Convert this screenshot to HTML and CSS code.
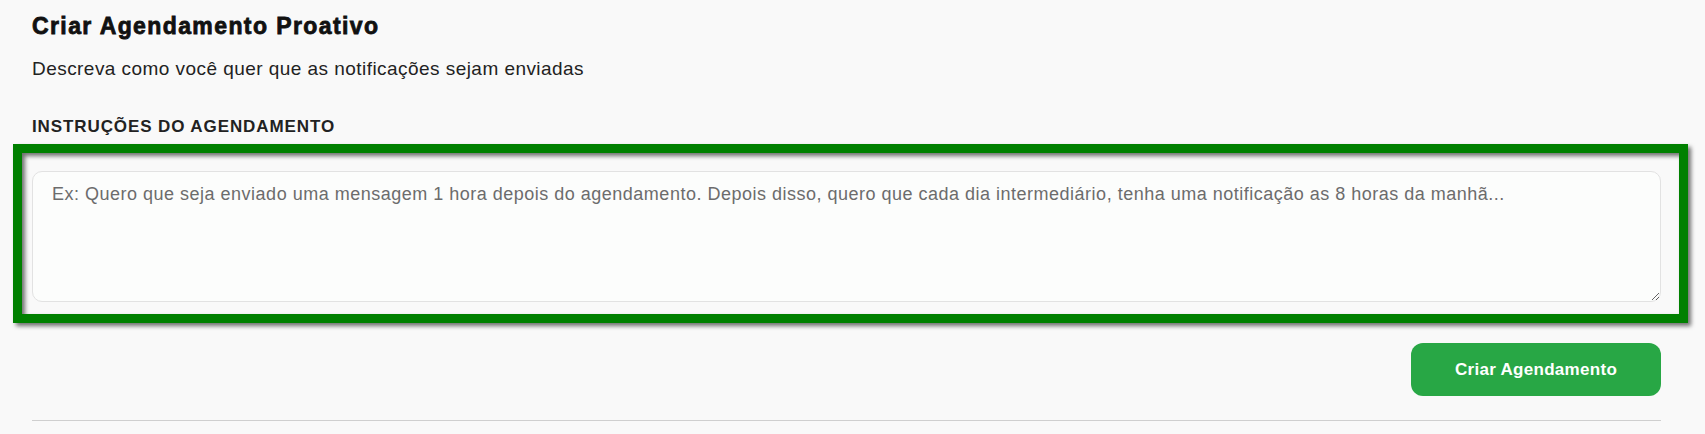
FILE: index.html
```html
<!DOCTYPE html>
<html lang="pt-BR">
<head>
  <meta charset="UTF-8">
  <meta name="viewport" content="width=device-width, initial-scale=1.0">
  <title>Criar Agendamento Proativo</title>
  <link rel="stylesheet" href="styles.css">
</head>
<body>

  <div class="panel">
    <h2 class="panel-title">Criar Agendamento Proativo</h2>
    <p class="panel-subtitle">Descreva como você quer que as notificações sejam enviadas</p>

    <label class="field-label" for="instructions">Instruções do agendamento</label>
    <div class="field-wrap">
      <textarea id="instructions" class="field-input" placeholder="Ex: Quero que seja enviado uma mensagem 1 hora depois do agendamento. Depois disso, quero que cada dia intermediário, tenha uma notificação as 8 horas da manhã..."></textarea>
      <!-- Highlight box around the field -->
      <div class="highlight"></div>
    </div>

    <div class="actions">
      <button class="btn-create">Criar Agendamento</button>
    </div>

    <hr class="divider">
  </div>

</body>
</html>
```

FILE: styles.css
```css
body {
  font-family: "Liberation Sans", Arial, sans-serif;
  margin: 0;
  padding: 0;
  background-color: #f9f9f9;
  color: #1a1a1a;
}

.panel {
  padding: 13px 44px 0 32px;
}

.panel-title {
  font-size: 23px;
  font-weight: 900;
  letter-spacing: 1.4px;
  -webkit-text-stroke: 0.8px #111;
  margin: 0;
  line-height: 26px;
  color: #111;
}

.panel-subtitle {
  font-size: 19px;
  letter-spacing: 0.45px;
  margin: 19px 0 0;
  line-height: 22px;
  color: #222;
}

.field-label {
  display: block;
  font-size: 17px;
  font-weight: bold;
  letter-spacing: 0.9px;
  text-transform: uppercase;
  margin-top: 37px;
  line-height: 20px;
  color: #222;
}

.field-wrap {
  position: relative;
  margin-top: 34px;
}

.field-input {
  display: block;
  box-sizing: border-box;
  width: 100%;
  height: 131px;
  padding: 12px 19px;
  font-family: "Liberation Sans", Arial, sans-serif;
  font-size: 18px;
  letter-spacing: 0.5px;
  background-color: #fcfdfc;
  border: 1px solid #e2e2e2;
  border-radius: 10px;
  resize: vertical;
  outline: none;
}

.field-input::placeholder {
  color: #6c6c6c;
}

.highlight {
  position: absolute;
  top: -27px;
  left: -19px;
  right: -27px;
  bottom: -21px;
  border: 9px solid #008000;
  filter: drop-shadow(3px 3px 2px rgba(0, 0, 0, 0.55));
  pointer-events: none;
}

.actions {
  display: flex;
  justify-content: flex-end;
  margin-top: 41px;
}

.btn-create {
  width: 250px;
  height: 53px;
  background-color: #28a745;
  color: #fff;
  border: none;
  border-radius: 12px;
  font-family: "Liberation Sans", Arial, sans-serif;
  font-size: 17px;
  font-weight: bold;
  letter-spacing: 0.3px;
  cursor: pointer;
}

.divider {
  border: none;
  border-top: 1px solid #cfcfcf;
  margin: 24px 0 0;
}
```
